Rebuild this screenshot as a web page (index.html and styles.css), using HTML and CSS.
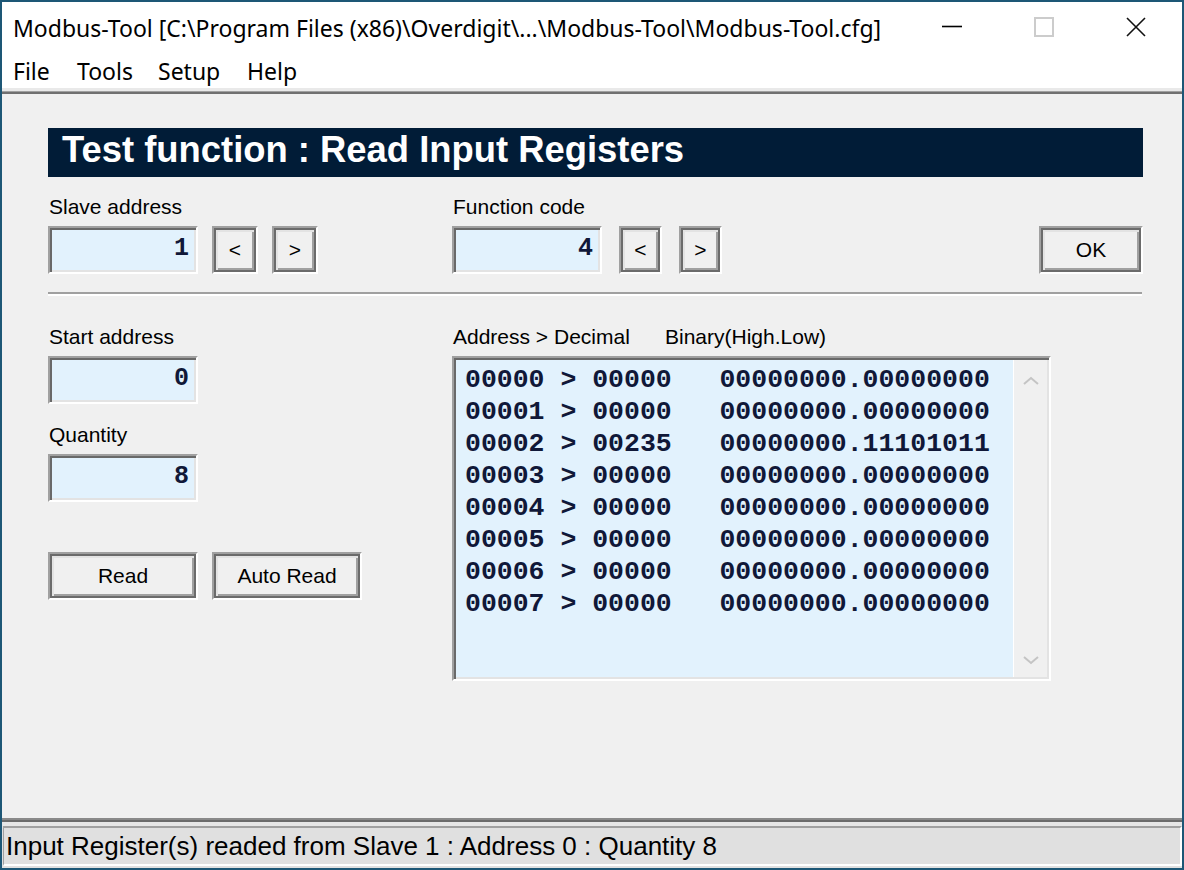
FILE: index.html
```html
<!DOCTYPE html>
<html>
<head>
<meta charset="utf-8">
<link rel="stylesheet" href="styles.css">
</head>
<body>
<div class="window">
  <div class="titlebar">
    <div class="title">Modbus-Tool [C:\Program Files (x86)\Overdigit\...\Modbus-Tool\Modbus-Tool.cfg]</div>
    <div class="caption-btns">
      <div class="cbtn"><svg width="20" height="20" viewBox="0 0 20 20"><path d="M0 9.5H20" stroke="#000" stroke-width="1.6" fill="none"/></svg></div>
      <div class="cbtn"><svg width="20" height="20" viewBox="0 0 20 20"><rect x="1" y="1" width="18" height="18" stroke="#cccccc" stroke-width="2" fill="none"/></svg></div>
      <div class="cbtn"><svg width="20" height="20" viewBox="0 0 20 20"><path d="M1 1L19 19M19 1L1 19" stroke="#111" stroke-width="1.6" fill="none"/></svg></div>
    </div>
  </div>
  <div class="menubar">
    <span>File</span><span>Tools</span><span>Setup</span><span>Help</span>
  </div>
  <div class="menu-sep"></div>
  <div class="client">
    <div class="banner">Test function : Read Input Registers</div>
    <div class="row1">
      <div class="group slave">
        <div class="label">Slave address</div>
        <div class="ctrls">
          <div class="edit">1</div>
          <div class="btn arrow">&lt;</div>
          <div class="btn arrow">&gt;</div>
        </div>
      </div>
      <div class="group func">
        <div class="label">Function code</div>
        <div class="ctrls">
          <div class="edit">4</div>
          <div class="btn arrow">&lt;</div>
          <div class="btn arrow">&gt;</div>
        </div>
      </div>
      <div class="btn ok">OK</div>
    </div>
    <div class="hsep"></div>
    <div class="row2">
      <div class="leftcol">
        <div class="label">Start address</div>
        <div class="edit">0</div>
        <div class="label qty">Quantity</div>
        <div class="edit">8</div>
        <div class="actions">
          <div class="btn wide">Read</div>
          <div class="btn wide">Auto Read</div>
        </div>
      </div>
      <div class="rightcol">
        <div class="label cols"><span>Address &gt; Decimal</span><span>Binary(High.Low)</span></div>
        <div class="listbox">
          <div class="rows">
            <div class="row">00000 &gt; 00000   00000000.00000000</div>
            <div class="row">00001 &gt; 00000   00000000.00000000</div>
            <div class="row">00002 &gt; 00235   00000000.11101011</div>
            <div class="row">00003 &gt; 00000   00000000.00000000</div>
            <div class="row">00004 &gt; 00000   00000000.00000000</div>
            <div class="row">00005 &gt; 00000   00000000.00000000</div>
            <div class="row">00006 &gt; 00000   00000000.00000000</div>
            <div class="row">00007 &gt; 00000   00000000.00000000</div>
          </div>
          <div class="vscroll">
            <svg width="16" height="10" viewBox="0 0 16 10"><path d="M1 8L8 2L15 8" stroke="#c4c4c4" stroke-width="2" fill="none"/></svg>
            <svg width="16" height="10" viewBox="0 0 16 10"><path d="M1 2L8 8L15 2" stroke="#c4c4c4" stroke-width="2" fill="none"/></svg>
          </div>
        </div>
      </div>
    </div>
  </div>
  <div class="status-sep"></div>
  <div class="statusbar">
    <div class="status-panel">Input Register(s) readed from Slave 1 : Address 0 : Quantity 8</div>
  </div>
</div>
</body>
</html>
```

FILE: styles.css
```css
* { box-sizing: border-box; }
html, body { margin: 0; padding: 0; background: #1d5776; }
body { width: 1184px; height: 870px; overflow: hidden; }

.window {
  width: 1184px;
  height: 870px;
  border: 2px solid #1d5776;
  display: flex;
  flex-direction: column;
  background: #f0f0f0;
  font-family: "Liberation Sans", Arial, sans-serif;
  color: #000;
  overflow: hidden;
}

.titlebar {
  height: 55px;
  flex: none;
  background: #fff;
  display: flex;
  justify-content: space-between;
  align-items: flex-start;
}
.title {
  font-family: "Noto Sans", "Open Sans", sans-serif;
  font-size: 23px;
  line-height: 32px;
  padding: 10px 0 0 11px;
  white-space: nowrap;
}
.caption-btns { display: flex; }
.cbtn {
  width: 92px;
  height: 50px;
  display: flex;
  align-items: center;
  justify-content: center;
}
.cbtn svg { display: block; }

.menubar {
  height: 31px;
  flex: none;
  background: #fff;
  display: grid;
  grid-template-columns: 64px 81px 89px auto;
  padding-left: 11px;
  font-family: "Noto Sans", "Open Sans", sans-serif;
  font-size: 23px;
  line-height: 28px;
}

.menu-sep {
  height: 6px;
  flex: none;
  border-top: 3px solid #e9e9e9;
  background: linear-gradient(#a0a0a0 0 1px, #707070 1px 3px);
}

.client {
  flex: 1;
  min-height: 0;
  padding: 34px 39px 0 46px;
  background: #f0f0f0;
}

.banner {
  height: 49px;
  background: #011c37;
  color: #fff;
  font-weight: bold;
  font-size: 36.4px;
  line-height: 43px;
  padding-left: 14px;
  white-space: nowrap;
}

.label {
  font-size: 21px;
  line-height: 24px;
  height: 24px;
  margin-bottom: 7px;
  padding-left: 1px;
  white-space: nowrap;
}

.row1 {
  display: flex;
  align-items: flex-end;
  margin-top: 18px;
}
.group.slave { width: 404px; }
.ctrls { display: flex; align-items: center; }
.slave .btn.arrow { width: 46px; margin-left: 14px; }
.func .btn.arrow { width: 43px; margin-left: 17px; }

.edit {
  width: 150px;
  height: 48px;
  background: #e2f2fd;
  border: 2px solid;
  border-color: #a0a0a0 #ffffff #ffffff #a0a0a0;
  box-shadow: inset 2px 2px 0 #696969, inset -2px -2px 0 #e3e3e3;
  text-align: right;
  padding-right: 7px;
  font-family: "Liberation Mono", "Courier New", monospace;
  font-weight: bold;
  font-size: 25px;
  line-height: 42px;
  color: #101838;
}

.btn {
  height: 48px;
  background: #f0f0f0;
  border: 2px solid;
  border-color: #a0a0a0 #ffffff #ffffff #a0a0a0;
  box-shadow: inset 0 0 0 2px #6b6b6b, inset 4px 4px 0 #e3e3e3, inset -4px -4px 0 #a0a0a0;
  display: flex;
  align-items: center;
  justify-content: center;
  font-size: 21px;
  line-height: 24px;
}
.btn.ok {
  width: 104px;
  margin-left: auto;
}

.hsep {
  height: 4px;
  margin-top: 18px;
  margin-right: 1px;
  border-top: 2px solid #a0a0a0;
  border-bottom: 2px solid #ffffff;
}

.row2 {
  display: flex;
  margin-top: 29px;
}
.leftcol { width: 404px; }
.label.qty { margin-top: 19px; }
.actions {
  display: flex;
  margin-top: 50px;
}
.btn.wide { width: 150px; }
.btn.wide + .btn.wide { margin-left: 14px; }

.label.cols {
  display: grid;
  grid-template-columns: 212px auto;
}

.listbox {
  width: 599px;
  height: 325px;
  background: #e2f2fd;
  border: 2px solid;
  border-color: #a0a0a0 #ffffff #ffffff #a0a0a0;
  box-shadow: inset 2px 2px 0 #696969, inset -2px -2px 0 #e3e3e3;
  display: flex;
  padding: 2px;
  overflow: hidden;
}
.rows {
  flex: 1;
  padding: 4px 0 0 9px;
  font-family: "Liberation Mono", "Courier New", monospace;
  font-weight: bold;
  font-size: 26.5px;
  line-height: 32px;
  color: #101838;
}
.row {
  white-space: pre;
  height: 32px;
}
.vscroll {
  width: 34px;
  background: #f0f0f0;
  border-left: 1px solid #ffffff;
  display: flex;
  flex-direction: column;
  justify-content: space-between;
  align-items: center;
  padding: 16px 0 12px 0;
}
.vscroll svg { display: block; }

.status-sep {
  height: 8px;
  flex: none;
  border-top: 2px solid #8a8a8a;
  background: linear-gradient(#6b6b6b 0 2px, #e6e6e6 2px);
}

.statusbar {
  height: 42px;
  flex: none;
  background: #e0e0e0;
  padding: 0 0 2px 1px;
}
.status-panel {
  height: 40px;
  border-top: 2px solid #a0a0a0;
  border-left: 1px solid #a0a0a0;
  border-right: 2px solid #ffffff;
  border-bottom: 2px solid #ffffff;
  font-size: 26px;
  line-height: 36px;
  padding-left: 2px;
  white-space: nowrap;
}
```
